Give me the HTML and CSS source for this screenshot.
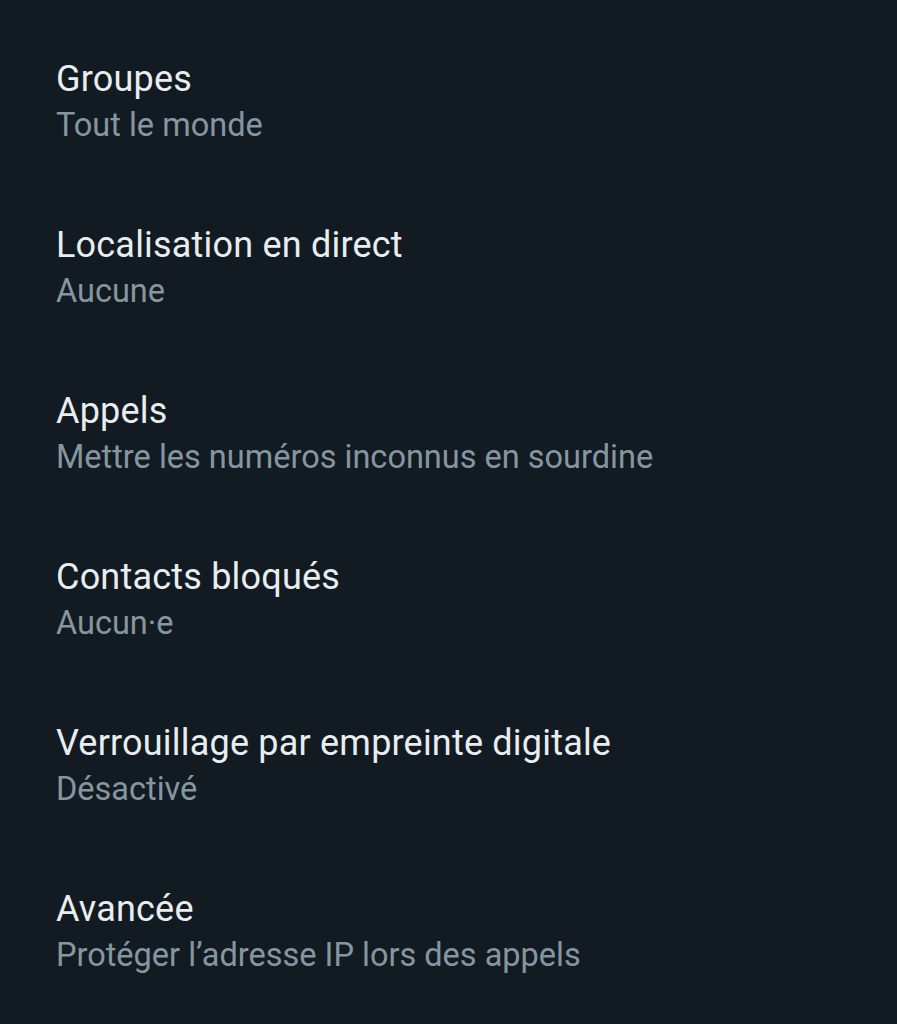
FILE: index.html
```html
<!DOCTYPE html>
<html lang="fr">
  <head>
    <meta charset="UTF-8" />
    <meta name="viewport" content="width=device-width, initial-scale=1.0" />
    <title>Confidentialité</title>
    <link rel="stylesheet" href="styles.css">
  </head>
  <body>
    <ul class="settings">
      <li class="setting">
        <div class="setting-title">Groupes</div>
        <div class="setting-value">Tout le monde</div>
      </li>
      <li class="setting">
        <div class="setting-title">Localisation en direct</div>
        <div class="setting-value">Aucune</div>
      </li>
      <li class="setting">
        <div class="setting-title">Appels</div>
        <div class="setting-value">Mettre les numéros inconnus en sourdine</div>
      </li>
      <li class="setting">
        <div class="setting-title">Contacts bloqués</div>
        <div class="setting-value">Aucun·e</div>
      </li>
      <li class="setting">
        <div class="setting-title">Verrouillage par empreinte digitale</div>
        <div class="setting-value">Désactivé</div>
      </li>
      <li class="setting">
        <div class="setting-title">Avancée</div>
        <div class="setting-value">Protéger l’adresse IP lors des appels</div>
      </li>
    </ul>
  </body>
</html>
```

FILE: styles.css
```css
html,
body {
  margin: 0;
  padding: 0;
  background-color: #121b22;
  height: 100%;
}
body {
  font-family: Roboto, 'Noto Sans', Arial, sans-serif;
  overflow: hidden;
}
.settings {
  list-style: none;
  margin: 0;
  padding: 0;
}
.setting {
  padding: 57px 56px 17px;
  height: 92px;
}
.setting-title {
  color: #e9edef;
  font-size: 36px;
  line-height: 44px;
  letter-spacing: 0.2px;
}
.setting-value {
  color: #8696a0;
  font-size: 32.5px;
  line-height: 48px;
}
```
